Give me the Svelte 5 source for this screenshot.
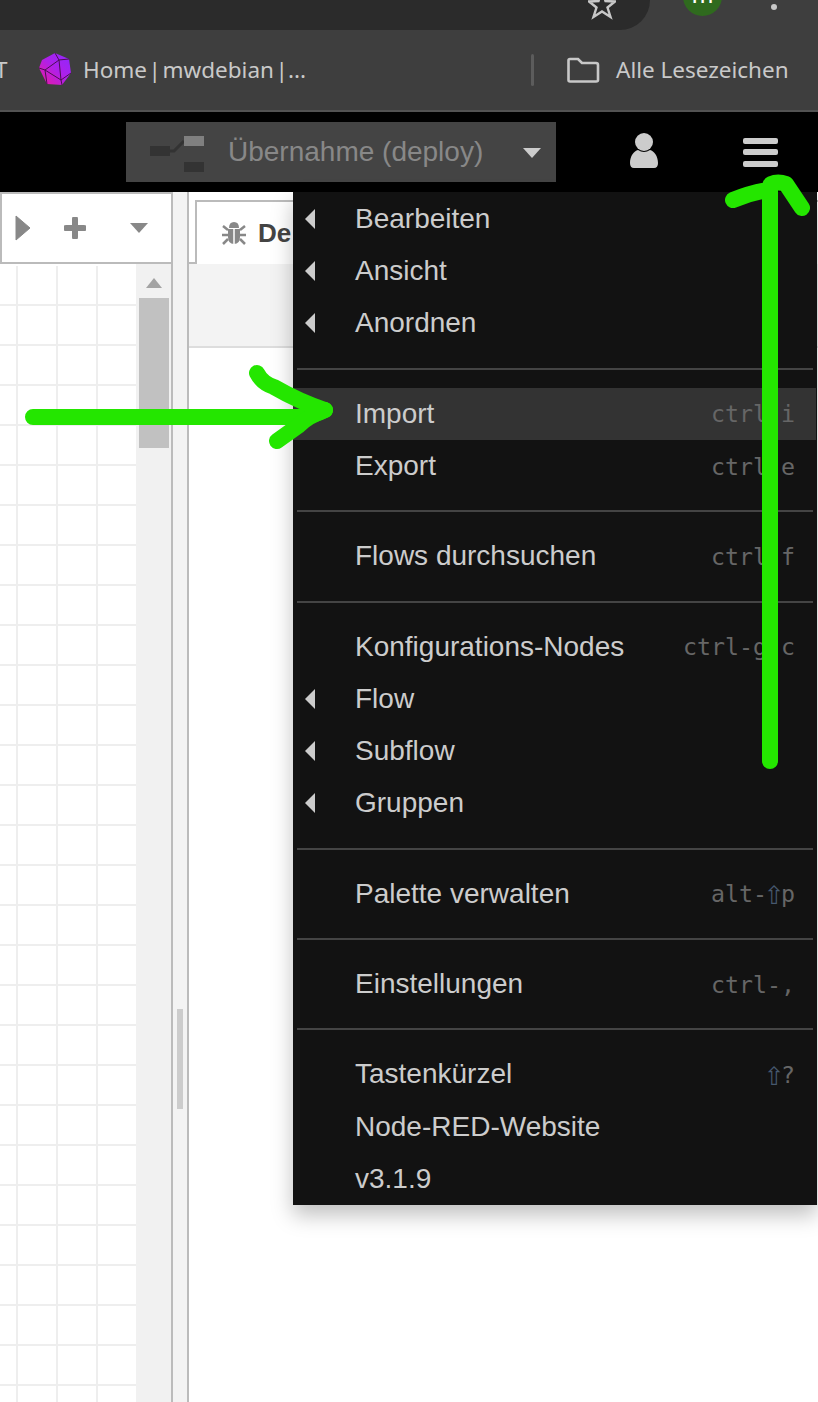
<script>
  // menu rows, in order; sep draws the divider line
  const menu = [
    { label: 'Bearbeiten', sub: true },
    { label: 'Ansicht', sub: true },
    { label: 'Anordnen', sub: true },
    { sep: true },
    { label: 'Import', key: 'ctrl-i', active: true },
    { label: 'Export', key: 'ctrl-e' },
    { sep: true },
    { label: 'Flows durchsuchen', key: 'ctrl-f' },
    { sep: true },
    { label: 'Konfigurations-Nodes', key: 'ctrl-g c' },
    { label: 'Flow', sub: true },
    { label: 'Subflow', sub: true },
    { label: 'Gruppen', sub: true },
    { sep: true },
    { label: 'Palette verwalten', key: 'alt-', shift: true, tail: 'p' },
    { sep: true },
    { label: 'Einstellungen', key: 'ctrl-,' },
    { sep: true },
    { label: 'Tastenkürzel', key: '', shift: true, tail: '?' },
    { label: 'Node-RED-Website' },
    { label: 'v3.1.9' }
  ];
</script>

<div class="page">
  <div class="omnibar">
    <div class="address">
      <svg class="star" width="28" height="28" viewBox="0 0 28 28">
        <path d="M14 -9 L17.5 1 L27 1.5 L19.5 7.5 L22.5 17 L14 11.5 L5.5 17 L8.5 7.5 L1 1.5 L10.5 1 Z" fill="none" stroke="#c8c8c8" stroke-width="2.4" />
      </svg>
    </div>
    <div class="avatar"><span>m</span></div>
    <div class="dot"></div>
  </div>

  <div class="bookmarks">
    <span class="cut">T</span>
    <svg class="favicon" width="34" height="34" viewBox="0 0 34 34">
      <defs>
        <linearGradient id="gem" x1="0" y1="1" x2="1" y2="0">
          <stop offset="0" stop-color="#ee1a9c" />
          <stop offset="0.5" stop-color="#b020e8" />
          <stop offset="1" stop-color="#8c28ff" />
        </linearGradient>
      </defs>
      <path d="M17 0 L31 6 L33 20 L24 32 L9 31 L1 15 L4 7 Z" fill="url(#gem)" />
      <path d="M17 0 L21 7 L31 6 M21 7 L7 17 L1 15 M7 17 L23 27 L24 32 M21 7 L23 27 L33 20 M7 17 L9 31" fill="none" stroke="#4a1050" stroke-width="1" />
    </svg>
    <span class="bm-text home">Home | mwdebian |...</span>
    <span class="bm-sep"></span>
    <svg class="folder" width="34" height="26" viewBox="0 0 34 26">
      <path d="M2.5 3.5 Q2.500 2 4 2 L12 2 L16 6 L30 6 Q32 6 32 8 L32 23 Q32 24.500 30 24.500 L4 24.500 Q2.500 24.500 2.500 23 Z" fill="none" stroke="#c8c8c8" stroke-width="2.600" />
    </svg>
    <span class="bm-text">Alle Lesezeichen</span>
  </div>

  <header class="topbar">
    <div class="deploy">
      <svg class="deploy-icon" width="56" height="38" viewBox="0 0 56 38">
        <rect x="0" y="10" width="20" height="10" fill="#333" />
        <path d="M20 15 L24 15 L34 5" fill="none" stroke="#333" stroke-width="3" />
        <rect x="34" y="0" width="20" height="10" fill="#808080" />
        <rect x="34" y="26" width="20" height="10" fill="#333" />
      </svg>
      <span class="deploy-label">Übernahme (deploy)</span>
      <span class="deploy-caret"></span>
    </div>
    <svg class="user" width="30" height="36" viewBox="0 0 30 36">
      <circle cx="15" cy="9" r="9" fill="#ccc" />
      <path d="M1 30 C1 23 5 18 9 17 Q15 21 21 17 C25 18 29 23 29 30 Q29 35 25 35 L5 35 Q1 35 1 30 Z" fill="#ccc" />
    </svg>
    <div class="burger"><i></i><i></i><i></i></div>
  </header>

  <div class="main">
    <section class="workspace">
      <div class="ws-tabs">
        <svg width="16" height="26" viewBox="0 0 16 26"><path d="M1 1 L15 13 L1 25 Z" fill="#888" stroke="#888" stroke-linejoin="round" /></svg>
        <svg class="plus" width="22" height="22" viewBox="0 0 22 22"><path d="M11 2 V20 M2 11 H20" stroke="#888" stroke-width="6" stroke-linecap="round" /></svg>
        <span class="ws-caret"></span>
      </div>
      <div class="ws-body">
        <div class="grid"></div>
        <div class="scrollbar">
          <span class="scroll-up"></span>
          <div class="thumb"></div>
        </div>
      </div>
    </section>

    <div class="divider"><div class="handle"></div></div>

    <aside class="sidebar">
      <div class="side-tabs">
        <div class="tab">
          <svg width="26" height="26" viewBox="0 0 26 26">
            <path d="M8 8 Q8 2 13 2 Q18 2 18 8 Z" fill="#888" />
            <path d="M7 9 H19 V17 Q19 24 13 24 Q7 24 7 17 Z" fill="#888" />
            <path d="M13 9 V24" stroke="#fff" stroke-width="1.500" />
            <path d="M7 10 L2 6 M19 10 L24 6 M7 15 H1 M19 15 H25 M7 19 L2 24 M19 19 L24 24" stroke="#888" stroke-width="2.500" fill="none" />
          </svg>
          <b>De</b>
        </div>
      </div>
      <div class="side-head"></div>
    </aside>
  </div>

  <nav class="menu">
    {#each menu as item}
      {#if item.sep}
        <div class="sep"></div>
      {:else}
        <div class="row" class:active={item.active}>
          {#if item.sub}<span class="tri"></span>{/if}
          <span class="label">{item.label}</span>
          {#if item.key || item.shift}
            <span class="key">{item.key}{#if item.shift}<span class="shift">⇧</span>{item.tail}{/if}</span>
          {/if}
        </div>
      {/if}
    {/each}
  </nav>

  <!-- hand drawn annotation arrows -->
  <svg class="marks" width="818" height="1402" viewBox="0 0 818 1402">
    <g fill="none" stroke="#24e600" stroke-width="16" stroke-linecap="round" stroke-linejoin="round">
      <path d="M33 417 L298 417 Q314 416 325 410" />
      <path d="M257 373 Q262 383 274 387 Q300 402 325 410 Q308 416 298 426 L277 441" />
      <path d="M770 761 L770 186" />
      <path d="M733 200 Q750 193 768 190 L771 184 Q778 181 786 184 L802 208" />
    </g>
  </svg>
</div>

<style>
  :global(body) {
    margin: 0;
    background: #fff;
  }

  .page {
    position: relative;
    width: 818px;
    height: 1402px;
    overflow: hidden;
    display: flex;
    flex-direction: column;
    font-family: "Liberation Sans", Arial, sans-serif;
  }

  .omnibar {
    height: 30px;
    flex: none;
    background: #3e3e3e;
    display: flex;
    position: relative;
  }

  .address {
    width: 650px;
    height: 30px;
    background: #2b2b2b;
    border-bottom-right-radius: 30px;
    position: relative;
    overflow: hidden;
  }

  .star {
    position: absolute;
    left: 588px;
    top: 0;
  }

  .avatar {
    position: absolute;
    left: 683px;
    top: -23px;
    width: 39px;
    height: 39px;
    border-radius: 50%;
    background: #2f6a1e;
    color: #fff;
    font-size: 26px;
    line-height: 35px;
    text-align: center;
    overflow: hidden;
  }

  .dot {
    position: absolute;
    left: 771px;
    top: 4px;
    width: 6px;
    height: 6px;
    border-radius: 50%;
    background: #c8c8c8;
  }

  .bookmarks {
    height: 80px;
    flex: none;
    background: #3e3e3e;
    border-bottom: 2px solid #525252;
    display: flex;
    align-items: center;
    font-family: "Noto Sans", "Open Sans", sans-serif;
    color: #c9c9c9;
    font-size: 22.500px;
    position: relative;
  }

  .cut {
    margin-left: -5px;
    width: 43px;
    margin-top: -2px;
  }

  .favicon {
    margin-right: 11px;
  }

  .home {
    width: 226px;
    word-spacing: -4.300px;
  }

  .bm-sep {
    width: 3px;
    height: 32px;
    border-radius: 2px;
    background: #5c5c5c;
    margin: 0 32px 0 222px;
  }

  .folder {
    margin-right: 16px;
  }

  .bm-text {
    white-space: nowrap;
    margin-top: -2px;
  }

  .topbar {
    height: 80px;
    flex: none;
    background: #000;
    display: flex;
    align-items: center;
  }

  .deploy {
    margin-left: 126px;
    width: 430px;
    height: 60px;
    background: #444;
    display: flex;
    align-items: center;
  }

  .deploy-icon {
    margin-left: 24px;
    margin-right: 22px;
    margin-top: 6px;
  }

  .deploy-label {
    font-size: 28px;
    color: #888;
    white-space: nowrap;
  }

  .deploy-caret {
    margin-left: 40px;
    margin-top: 2px;
    border-left: 9px solid transparent;
    border-right: 9px solid transparent;
    border-top: 10px solid #ccc;
  }

  .user {
    margin-left: 73px;
    margin-top: -2px;
  }

  .burger {
    margin-left: 84px;
    width: 35px;
    display: flex;
    flex-direction: column;
    gap: 5.500px;
  }

  .burger i {
    display: block;
    height: 6px;
    border-radius: 2px;
    background: #ccc;
  }

  .main {
    flex: 1;
    display: flex;
    min-height: 0;
    background: #fff;
  }

  .workspace {
    width: 171px;
    flex: none;
    display: flex;
    flex-direction: column;
    border-right: 2px solid #bbb;
  }

  .ws-tabs {
    height: 72px;
    flex: none;
    box-sizing: border-box;
    border-top: 2px solid #bbb;
    border-left: 2px solid #bbb;
    border-bottom: 2px solid #bbb;
    display: flex;
    align-items: center;
    padding-left: 13px;
  }

  .plus {
    margin-left: 33px;
  }

  .ws-caret {
    margin-left: 44px;
    border-left: 9px solid transparent;
    border-right: 9px solid transparent;
    border-top: 10px solid #888;
  }

  .ws-body {
    flex: 1;
    display: flex;
    min-height: 0;
    padding-top: 2px;
  }

  .grid {
    width: 136px;
    background-color: #fff;
    background-image:
      linear-gradient(to right, #eee 2px, transparent 2px),
      linear-gradient(to bottom, #eee 2px, transparent 2px);
    background-size: 40px 40px;
    background-position: 16px 38px;
  }

  .scrollbar {
    flex: 1;
    background: #f1f1f1;
    display: flex;
    flex-direction: column;
    align-items: center;
    margin-top: -2px;
  }

  .scroll-up {
    margin-top: 14px;
    border-left: 8px solid transparent;
    border-right: 8px solid transparent;
    border-bottom: 10px solid #a3a3a3;
  }

  .thumb {
    margin-top: 10px;
    width: 30px;
    height: 150px;
    background: #c1c1c1;
    margin-left: 1px;
  }

  .divider {
    width: 14px;
    flex: none;
    background: #f3f3f3;
    border-right: 2px solid #bbb;
    display: flex;
    justify-content: center;
  }

  .handle {
    width: 6px;
    height: 100px;
    margin-top: 817px;
    background: #ccc;
  }

  .sidebar {
    flex: 1;
    display: flex;
    flex-direction: column;
  }

  .side-tabs {
    height: 72px;
    flex: none;
    box-sizing: border-box;
    padding: 8px 0 0 6px;
    background: linear-gradient(to bottom, #fff 70px, #bbb 70px);
  }

  .tab {
    height: 64px;
    box-sizing: border-box;
    background: #fff;
    border-top: 2px solid #bbb;
    border-left: 2px solid #bbb;
    display: flex;
    align-items: center;
    padding-left: 24px;
    gap: 11px;
    color: #444;
    font-size: 26px;
  }

  .side-head {
    height: 84px;
    flex: none;
    box-sizing: border-box;
    background: #f3f3f3;
    border-bottom: 2px solid #ddd;
  }

  .menu {
    position: absolute;
    left: 293px;
    top: 192px;
    width: 524px;
    box-sizing: border-box;
    padding-top: 1px;
    background: #121212;
    box-shadow: 0 10px 20px rgba(0, 0, 0, 0.25);
  }

  .row {
    position: relative;
    height: 52.200px;
    display: flex;
    align-items: center;
    justify-content: space-between;
    padding: 0 22px 0 62px;
    color: #ccc;
    font-size: 28px;
  }

  .row.active {
    background: #333;
    margin-right: 1px;
    padding-right: 21px;
  }

  .tri {
    position: absolute;
    left: 12px;
    top: 16px;
    border-top: 10px solid transparent;
    border-bottom: 10px solid transparent;
    border-right: 10px solid #ccc;
  }

  .key {
    font-family: "DejaVu Sans Mono", "Liberation Mono", monospace;
    font-size: 23.250px;
    color: #666;
    white-space: pre;
  }

  .shift {
    display: inline-block;
    width: 14px;
    line-height: 0;
    font-size: 34px;
    text-indent: -3px;
    letter-spacing: -8px;
    color: #46586e;
    vertical-align: -2px;
  }

  .sep {
    height: 2px;
    margin: 18.200px 4px 18px 4px;
    background: #444;
  }

  .marks {
    position: absolute;
    left: 0;
    top: 0;
    pointer-events: none;
  }
</style>
